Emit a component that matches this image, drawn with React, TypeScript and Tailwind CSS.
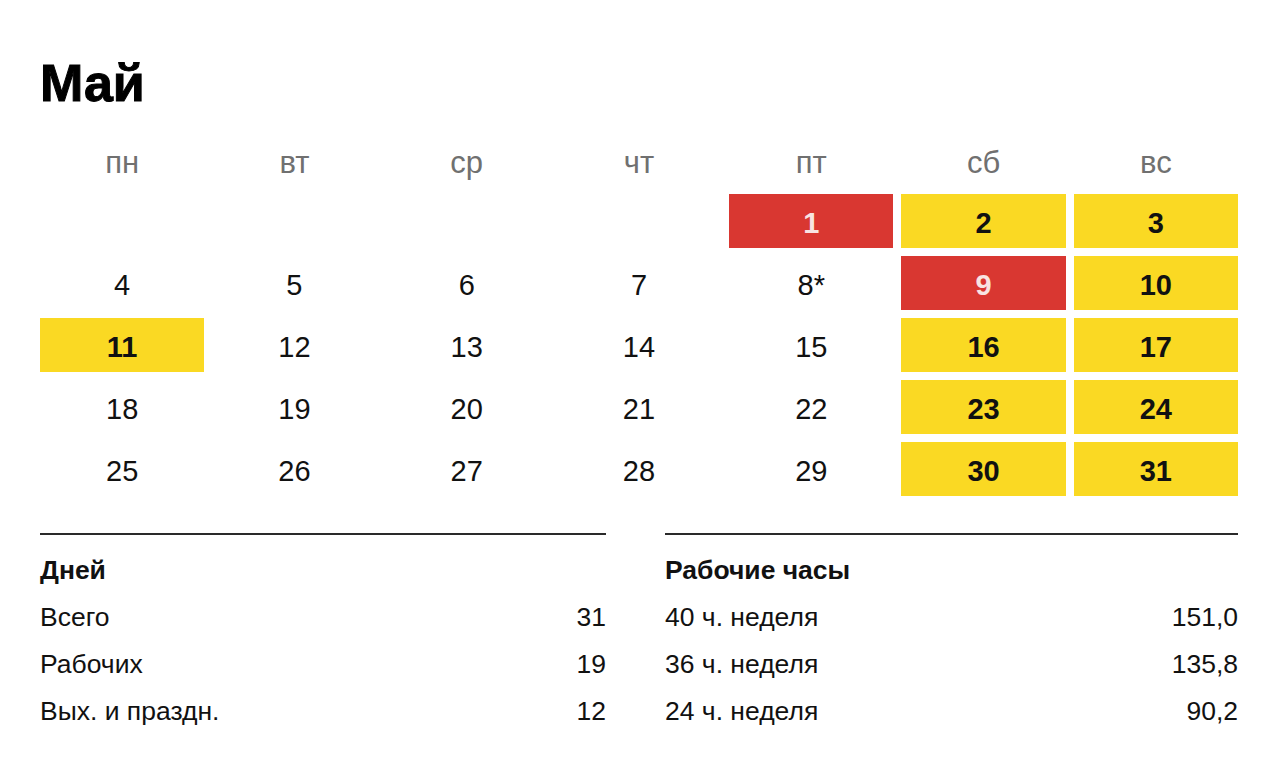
import React from 'react';

type Kind = 'plain' | 'weekend' | 'holiday' | 'empty';

interface Day {
  label: string;
  kind: Kind;
}

const dayNames = ['пн', 'вт', 'ср', 'чт', 'пт', 'сб', 'вс'];

const weekends = [2, 3, 10, 11, 16, 17, 23, 24, 30, 31];
const holidays = [1, 9];

const buildDays = (): Day[] => {
  const days: Day[] = [];
  for (let i = 0; i < 4; i++) days.push({ label: '', kind: 'empty' });
  for (let d = 1; d <= 31; d++) {
    let kind: Kind = 'plain';
    if (holidays.includes(d)) kind = 'holiday';
    else if (weekends.includes(d)) kind = 'weekend';
    days.push({ label: d === 8 ? '8*' : String(d), kind });
  }
  return days;
};

const DayCell: React.FC<{ day: Day }> = ({ day }) => {
  const styles: Record<Kind, string> = {
    plain: 'text-[#111] font-normal',
    weekend: 'bg-[#fad923] text-[#111] font-bold',
    holiday: 'bg-[#d93731] text-[#f8e4e2] font-bold',
    empty: '',
  };
  return (
    <div
      className={`h-[54px] pt-[4px] flex items-center justify-center text-[29px] leading-none ${styles[day.kind]}`}
    >
      {day.label}
    </div>
  );
};

interface StatsProps {
  title: string;
  rows: [string, string][];
  width: string;
}

const Stats: React.FC<StatsProps> = ({ title, rows, width }) => (
  <div className={width}>
    <div className="h-[2px] bg-[#2a2a2a]" />
    <div className="mt-[12px] h-[47px] flex items-center text-[26.5px] leading-none font-bold text-[#111]">
      {title}
    </div>
    {rows.map(([label, value]) => (
      <div
        key={label}
        className="h-[47px] flex items-center justify-between text-[26.5px] leading-none text-[#111]"
      >
        <span>{label}</span>
        <span>{value}</span>
      </div>
    ))}
  </div>
);

export default function App() {
  const days = buildDays();

  return (
    <div
      className="w-[1280px] h-[782px] bg-white px-[40px] pt-[57px] overflow-hidden"
      style={{ fontFamily: '"Liberation Sans", Arial, sans-serif' }}
    >
      {/* Title */}
      <h1 className="text-[52px] leading-none font-bold text-black [-webkit-text-stroke:1px_black]">Май</h1>

      {/* Weekday header */}
      <div className="mt-[38px] grid grid-cols-7 gap-x-[8px] w-[1198px]">
        {dayNames.map((name) => (
          <div key={name} className="text-center text-[31px] leading-none text-[#707070]">
            {name}
          </div>
        ))}
      </div>

      {/* Calendar grid */}
      <div className="mt-[16px] grid grid-cols-7 gap-x-[8px] gap-y-[8px] w-[1198px]">
        {days.map((day, i) => (
          <DayCell key={i} day={day} />
        ))}
      </div>

      {/* Summary */}
      <div className="mt-[37px] flex justify-between w-[1198px]">
        <Stats
          title="Дней"
          width="w-[566px]"
          rows={[
            ['Всего', '31'],
            ['Рабочих', '19'],
            ['Вых. и праздн.', '12'],
          ]}
        />
        <Stats
          title="Рабочие часы"
          width="w-[573px]"
          rows={[
            ['40 ч. неделя', '151,0'],
            ['36 ч. неделя', '135,8'],
            ['24 ч. неделя', '90,2'],
          ]}
        />
      </div>
    </div>
  );
}
